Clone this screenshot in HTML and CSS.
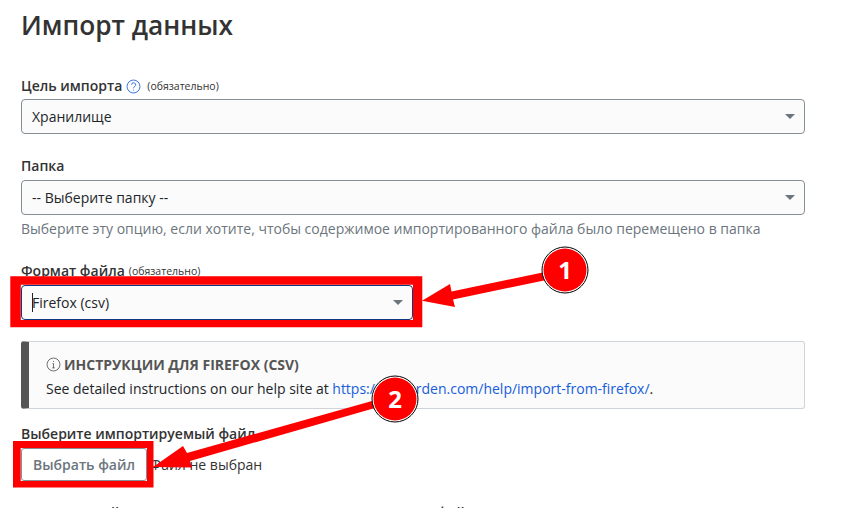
FILE: index.html
```html
<!DOCTYPE html>
<html lang="ru">
<head>
<meta charset="utf-8">
<title>Импорт данных</title>
<link rel="stylesheet" href="styles.css">
</head>
<body>
<main class="page">
  <h1 class="title">Импорт данных</h1>
  <div class="field">
    <div class="label-row"><label class="label">Цель импорта</label>
      <svg class="help" viewBox="0 0 16 16"><circle cx="8" cy="8" r="6.9"/><path d="M5.9 6.2a2.2 2.2 0 1 1 3.3 1.9c-.8.5-1.2.9-1.2 1.8"/><path d="M8 11.4v.9"/></svg>
      <span class="req req-gap">(обязательно)</span></div>
    <div class="select"><span>Хранилище</span><i class="caret"></i></div>
  </div>
  <div class="field field-folder">
    <div class="label-row label-row-high"><label class="label">Папка</label></div>
    <div class="select"><span>-- Выберите папку --</span><i class="caret"></i></div>
    <p class="hint">Выберите эту опцию, если хотите, чтобы содержимое импортированного файла было перемещено в папка</p>
  </div>
  <div class="field field-format">
    <div class="label-row label-row-high"><label class="label">Формат файла</label><span class="req req-tight">(обязательно)</span></div>
    <div class="select select-focus"><span class="cursor"></span><span>Firefox (csv)</span><i class="caret"></i></div>
  </div>
  <div class="callout">
    <div class="callout-title">
      <svg class="info" viewBox="0 0 16 16"><circle cx="8" cy="8" r="6.9"/><path d="M8 7v4.6M6.6 11.6h2.8M6.9 7h1.1"/><path d="M8 4.3v1"/></svg>
      ИНСТРУКЦИИ ДЛЯ FIREFOX (CSV)
    </div>
    <div class="callout-body">See detailed instructions on our help site at <a href="#">https://bitwarden.com/help/import-from-firefox/</a>.</div>
  </div>
  <div class="file-field">
    <label class="label">Выберите импортируемый файл</label>
    <div class="file-row"><button class="file-btn">Выбрать файл</button><span class="file-name">Файл не выбран</span></div>
  </div>
  <p class="label next">или скопируйте и вставьте содержимое импортируемого файла</p>
</main>
<svg class="marks" viewBox="0 0 854 508" width="854" height="508">
  <path class="frame" d="M10.3 276.3H422.3V327.3H10.3ZM20.8 284.7V320H413V284.7Z"/>
  <path class="frame" d="M13 441H153.5V487.5H13ZM20.7 448V481H147V448Z"/>
  <path class="frame" d="M422 300.7 450 284 451.5 291.5 545 272 546.5 280 453 299.5 455 307Z"/>
  <path class="frame" d="M153 467 183 446 187 453 372 401 375 408 190 461 192 467.5Z"/>
  <g class="badge">
    <circle class="ring" cx="565" cy="270" r="23"/>
    <circle class="disc" cx="565" cy="270" r="21.5"/>
    <text x="565" y="279">1</text>
    <circle class="ring" cx="395" cy="399" r="23"/>
    <circle class="disc" cx="395" cy="399" r="21.5"/>
    <text x="395" y="408">2</text>
  </g>
</svg>
</body>
</html>
```
FILE: styles.css
```css
* { box-sizing: border-box; }
html, body { margin: 0; height: 508px; overflow: hidden; background: #fff; }
body { position: relative; font-family: "Open Sans", sans-serif; font-size: 14px; color: #212529; }
.page { width: 784px; margin-left: 21px; }
.title { margin: 0; padding-top: 7px; height: 77px; font-size: 26.25px; line-height: 36px; font-weight: 600; color: #333; }
.field { height: 81px; }
.field-folder { height: 105px; }
.field-format { height: 78px; }
.label-row { display: flex; align-items: center; height: 22px; padding-bottom: 4px; }
.label-row-high { padding-bottom: 6px; }
.label { font-weight: 600; font-size: 14px; line-height: 18px; color: #333; }
.req { font-size: 10.5px; color: #333; }
.req-gap { margin-left: 6px; }
.req-tight { margin-left: 4px; }
.help { width: 15px; height: 15px; margin-left: 4px; fill: none; stroke: #175ddc; stroke-width: .9; }
.select { display: flex; align-items: center; justify-content: space-between; position: relative; height: 35px; padding: 0 9.5px 0 10px; background: #fbfbfb; border: 1px solid #868e96; border-radius: 4px; color: #212529; }
.select-focus { width: 392px; border-color: #0e3781; }
.cursor { position: absolute; left: 10px; top: 7px; width: 1px; height: 19px; background: #212529; }
.caret { width: 0; height: 0; border-left: 5.5px solid transparent; border-right: 5.5px solid transparent; border-top: 5.5px solid #6c757d; }
.hint { margin: 4px 0 0; font-size: 14px; line-height: 20px; color: #6c757d; }
.callout { height: 68px; padding: 11px 15px 0 17px; background: #fbfbfb; border: 1px solid #ced4da; border-left: 8px solid #555; border-radius: 3px; }
.callout-title { display: flex; align-items: center; gap: 3px; height: 22px; font-weight: 700; color: #555; }
.info { width: 15px; height: 15px; fill: none; stroke: #555; stroke-width: .9; }
.callout-body { line-height: 22px; margin-top: 3px; }
.callout a { color: #175ddc; text-decoration: none; }
.file-field { margin-top: 16px; }
.file-field > .label { display: block; }
.file-row { display: flex; align-items: center; gap: 3px; margin-top: 5px; }
.file-btn { width: 126px; height: 33px; padding: 0; font: 600 14px "Open Sans", sans-serif; color: #6c757d; background: #fff; border: 1px solid #868e96; border-radius: 3px; }
.file-name { color: #333; }
.next { margin: 21px 0 0; line-height: 22px; }
.marks { position: absolute; left: 0; top: 0; }
.frame { fill: #f00; fill-rule: evenodd; }
.ring { fill: #fff; stroke: #000; stroke-width: 1; }
.disc { fill: #f00; }
.badge text { font: 700 24px "Open Sans", sans-serif; fill: #fff; text-anchor: middle; }
```
